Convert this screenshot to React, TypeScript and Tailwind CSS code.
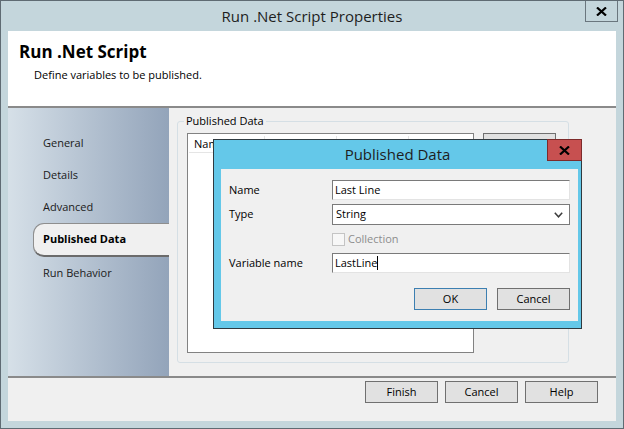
import React from "react";

const font = { fontFamily: '"Segoe UI", "Open Sans", "Noto Sans", sans-serif' };

function NavItem({ label, active }: { label: string; active?: boolean }) {
  if (active) {
    return (
      <div className="h-[34px] ml-[25px] flex items-center pl-[9px] bg-[#f0f0f0] border border-[#8e8e8e] border-r-0 border-b-2 border-b-[#6b6b6b] rounded-l-[11px] font-bold text-[11px] text-black">
        {label}
      </div>
    );
  }
  return (
    <div className="h-[32px] flex items-center pl-[35px] text-[11px] text-[#1a1a1a]">
      {label}
    </div>
  );
}

function WinButton({ label, focused }: { label?: string; focused?: boolean }) {
  return (
    <div
      className={`w-[73px] h-[22px] flex items-center justify-center bg-[#e1e1e1] text-[11px] text-black border ${
        focused ? "border-[#3c7fb1]" : "border-[#707070]"
      }`}
    >
      {label}
    </div>
  );
}

function PublishedDialog() {
  return (
    <div className="absolute left-[212px] top-[138px] w-[369px] h-[190px] bg-[#64c8e9] border border-[#2f3a40] flex flex-col pl-[7px] pr-[3px] pb-[7px]">
      {/* title */}
      <div className="h-[29px] flex items-center justify-center text-[15px] text-[#1e1e1e] pr-[4px]">
        Published Data
      </div>
      <div className="absolute right-[-1px] top-[-1px] w-[35px] h-[22px] bg-[#c75050] border border-[#7d2a2a] flex items-center justify-center">
        <svg width="11" height="9" viewBox="0 0 11 9">
          <path d="M1 0.5 L10 8.5 M10 0.5 L1 8.5" stroke="#000" strokeWidth="2.2" />
        </svg>
      </div>

      {/* body */}
      <div className="flex-1 bg-[#f0f0f0] flex flex-col pl-[8px] pr-[8px] text-[11px] text-black">
        <div className="flex items-center mt-[11px] h-[20px]">
          <div className="w-[103px]">Name</div>
          <div className="flex-1 h-full bg-white border border-[#e3e3e3] border-t-[#7a7a7a] border-l-[#7a7a7a] flex items-center pl-[2px]">
            Last Line
          </div>
        </div>
        <div className="flex items-center mt-[4px] h-[21px]">
          <div className="w-[103px]">Type</div>
          <div className="flex-1 h-full bg-white border border-[#7a7a7a] flex items-center justify-between pl-[3px] pr-[6px]">
            <span>String</span>
            <svg width="9" height="6" viewBox="0 0 9 6">
              <path d="M0.8 0.8 L4.5 4.8 L8.2 0.8" fill="none" stroke="#3c3c3c" strokeWidth="1.5" />
            </svg>
          </div>
        </div>
        <div className="flex items-center mt-[8px] h-[13px]">
          <div className="w-[103px]" />
          <div className="w-[13px] h-[13px] border border-[#c4c4c4] bg-[#f7f7f7]" />
          <span className="ml-[3px] text-[#8d8d8d]">Collection</span>
        </div>
        <div className="flex items-center mt-[7px] h-[20px]">
          <div className="w-[103px]">Variable name</div>
          <div className="flex-1 h-full bg-white border border-[#e3e3e3] border-t-[#7a7a7a] border-l-[#7a7a7a] flex items-center pl-[2px]">
            <span>LastLine</span>
            <span className="w-px h-[14px] bg-black" />
          </div>
        </div>
        <div className="flex justify-end gap-[10px] mt-[15px]">
          <WinButton label="OK" focused />
          <WinButton label="Cancel" />
        </div>
      </div>
    </div>
  );
}

export default function App() {
  return (
    <div
      style={font}
      className="relative w-[624px] h-[429px] bg-[#c4d6dc] border border-[#5f6b73] flex flex-col overflow-hidden"
    >
      {/* Title bar */}
      <div className="relative h-[30px] flex items-center justify-center text-[15px] text-[#1e1e1e]">
        Run .Net Script Properties
        <div className="absolute right-[5px] top-[-1px] w-[33px] h-[22px] border border-[#6a767e] flex items-center justify-center">
          <svg width="11" height="9" viewBox="0 0 11 9">
            <path d="M1 0.5 L10 8.5 M10 0.5 L1 8.5" stroke="#000" strokeWidth="2.2" />
          </svg>
        </div>
      </div>

      {/* Client area */}
      <div className="flex-1 mx-[7px] mb-[7px] flex flex-col bg-[#f0f0f0]">
        {/* Header */}
        <div className="h-[75px] bg-white pl-[11px] pt-[9px]">
          <div className="text-[17px] font-bold text-black leading-[24px]">Run .Net Script</div>
          <div className="text-[11px] text-black pl-[15px] mt-[3px]">Define variables to be published.</div>
        </div>
        <div className="h-[2px] bg-[#8a8a8a]" />

        {/* Body */}
        <div className="flex flex-1">
          <div className="w-[161px] bg-gradient-to-r from-[#d6e0e8] to-[#93a4ba] pt-[19px]">
            <NavItem label="General" />
            <NavItem label="Details" />
            <NavItem label="Advanced" />
            <NavItem label="Published Data" active />
            <NavItem label="Run Behavior" />
          </div>

          <div className="flex-1 pl-[8px] pt-[13px]">
            <div className="relative w-[392px] h-[242px] border border-[#d5dfe5] rounded-[3px] pl-[9px] pt-[11px] flex gap-[9px]">
              <span className="absolute left-[6px] top-[-9px] bg-[#f0f0f0] px-[2px] text-[11px] text-black">
                Published Data
              </span>
              <div className="w-[287px] h-[220px] bg-white border border-[#828282] pt-[2px] px-px">
                <div className="flex h-[17px] text-[11px] text-black">
                  <div className="w-[76px] border-r border-b border-[#e5e5e5] pl-[5px] flex items-center">Name</div>
                  <div className="w-[72px] border-r border-b border-[#e5e5e5]" />
                  <div className="w-[72px] border-r border-b border-[#e5e5e5]" />
                </div>
              </div>
              <div className="flex flex-col gap-[6px]">
                <WinButton />
                <WinButton />
                <WinButton />
              </div>
            </div>
          </div>
        </div>

        <div className="h-[2px] bg-[#8a8a8a]" />
        {/* Footer */}
        <div className="h-[43px] flex justify-end gap-[7px] pt-[3px] pr-[18px]">
          <WinButton label="Finish" />
          <WinButton label="Cancel" />
          <WinButton label="Help" />
        </div>
      </div>

      <PublishedDialog />
    </div>
  );
}
